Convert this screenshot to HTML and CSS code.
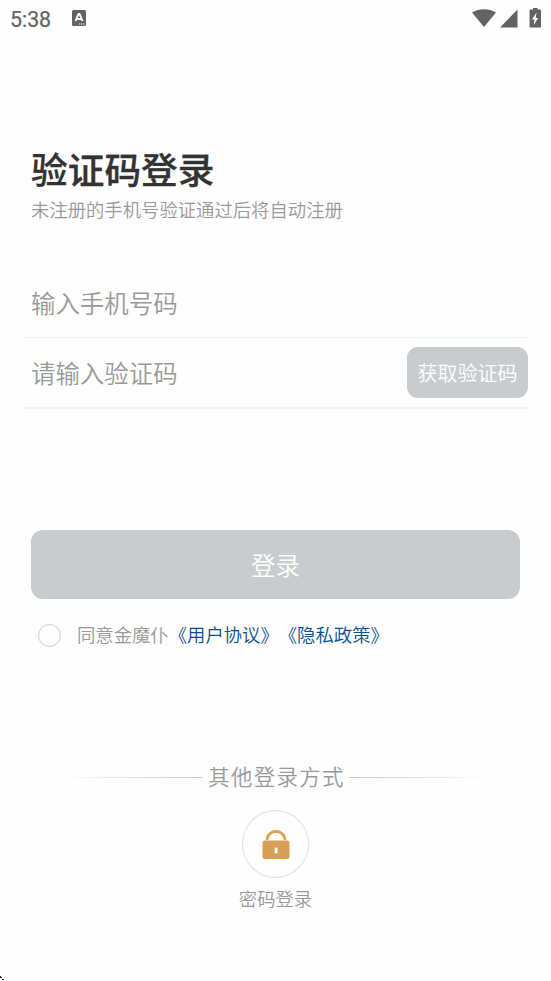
FILE: index.html
```html
<!DOCTYPE html>
<html lang="zh-CN">
<head>
<meta charset="utf-8">
<title>验证码登录</title>
<link rel="stylesheet" href="styles.css">
</head>
<body>
<header class="status">
  <span class="time">5:38</span>
  <svg class="app-icon" width="14" height="16" viewBox="0 0 14 16"><rect width="14" height="16" rx="1.500" fill="#636363"/><path d="M3.500 11 6.500 4h1L10.500 11M4.900 9h4.200" fill="none" stroke="#fff" stroke-width="1.900"/><path d="M7 14h1.200M9 14h1.200M11 14h1.200" stroke="#fff" stroke-width="1.200"/></svg>
  <svg class="signals" width="72" height="22" viewBox="0 0 72 22" fill="#636363"><path d="M2 4.500C8.500 0 19.500 0 26 4.500L14 19Z"/><path d="M47.500 1.500V19.500H30Z"/><path d="M60.500 1.500H63V0h4.500v1.500H70q1 0 1 1V18.500q0 1-1 1h-9.500q-1 0-1-1V2.500q0-1 1-1Z"/><path d="M66.500 4.500 62 11.500h2.500L63.700 17l4.500-7h-2.500Z" fill="#fff"/></svg>
</header>
<main>
  <h1>验证码登录</h1>
  <p class="subtitle">未注册的手机号验证通过后将自动注册</p>
  <form class="fields">
    <div class="field phone">输入手机号码</div>
    <div class="field code"><span>请输入验证码</span><button type="button" class="get-code">获取验证码</button></div>
  </form>
  <button type="button" class="login">登录</button>
  <div class="agreement"><span class="radio"></span><span class="terms">同意金魔仆<a>《用户协议》</a><a>《隐私政策》</a></span></div>
  <div class="divider"><i class="line left"></i><span class="divider-text">其他登录方式</span><i class="line right"></i></div>
  <div class="alternative">
    <span class="lock"><svg width="28" height="32" viewBox="0 0 28 32"><path d="M5.200 10.500a9 9 0 0 1 17.600 0" fill="none" stroke="#d8a052" stroke-width="3" stroke-linecap="round"/><rect x=".5" y="12.500" width="27" height="18.500" rx="2.200" fill="#d8a052"/><rect x="12.700" y="19.500" width="2.800" height="6" rx="1.200" fill="#fff"/></svg></span>
    <span>密码登录</span>
  </div>
</main>
<svg class="cursor" width="5" height="5" viewBox="0 0 5 5"><path d="M0 0h1v1h1v1H0ZM2 3h1v1H2ZM3 3h1v1H3Z" fill="#222"/></svg>
</body>
</html>
```
FILE: styles.css
```css
* { box-sizing: border-box; }
body {
  margin: 0;
  height: 981px;
  overflow: hidden;
  position: relative;
  background: #fefefe;
  color: #999;
  font-family: "Noto Sans CJK SC", sans-serif;
  font-weight: 350;
  text-spacing-trim: space-all;
}
button { border: 0; padding: 0; font-family: inherit; font-weight: 350; color: #fff; background: #c9cccf; }
.status { height: 40px; display: flex; padding: 8px 9px 0 10px; color: #636363; }
.time { width: 62px; font: 400 21.300px/24px Roboto, sans-serif; -webkit-text-stroke: .2px #636363; }
.app-icon { margin-top: 2px; }
.signals { margin-left: auto; }
main { padding: 103px 31px 0; }
h1 { margin: 0; font-size: 36.700px; line-height: 50px; font-weight: 500; color: #333; -webkit-text-stroke: .3px #333; }
.subtitle { margin: 2px 0 0; font-size: 18.350px; line-height: 28px; }
.fields { margin: 44px -8px 0 -7px; font-size: 24.450px; }
.field { display: flex; align-items: center; justify-content: space-between; padding-left: 7px; }
.phone { height: 71px; border-bottom: 1px solid #f1f1f1; }
.code { height: 71px; border-bottom: 2px solid #f1f1f1; }
.get-code { width: 121px; height: 51px; border-radius: 11px; font-size: 20px; }
.login { display: block; width: 100%; height: 69px; margin-top: 121px; border-radius: 12px; font-size: 24.450px; }
.agreement { display: flex; align-items: center; height: 28px; margin: 22px 0 0 7px; font-size: 18.350px; }
.terms { padding-bottom: 2px; white-space: nowrap; }
.radio { flex: none; width: 23px; height: 23px; margin-right: 16px; border: 1.500px solid #cfcfcf; border-radius: 50%; }
.agreement a { color: #095088; }
.divider { display: flex; align-items: center; justify-content: center; height: 32px; margin-top: 112px; font-size: 21.400px; letter-spacing: 1.400px; }
.divider-text { padding-bottom: 3px; white-space: nowrap; }
.line { flex: none; width: 139px; height: 1px; }
.left { margin-right: 6px; background: linear-gradient(to right, transparent, #c6c6c6); }
.right { margin-left: 4px; background: linear-gradient(to left, transparent, #c6c6c6); }
.alternative { display: flex; flex-direction: column; align-items: center; margin-top: 17px; font-size: 18.350px; line-height: 28px; }
.lock { width: 67px; height: 68px; margin-bottom: 6px; display: flex; align-items: center; justify-content: center; border: 1.500px solid #e0e0e0; border-radius: 50%; }
.cursor { position: absolute; left: 0; bottom: 0; }
```
